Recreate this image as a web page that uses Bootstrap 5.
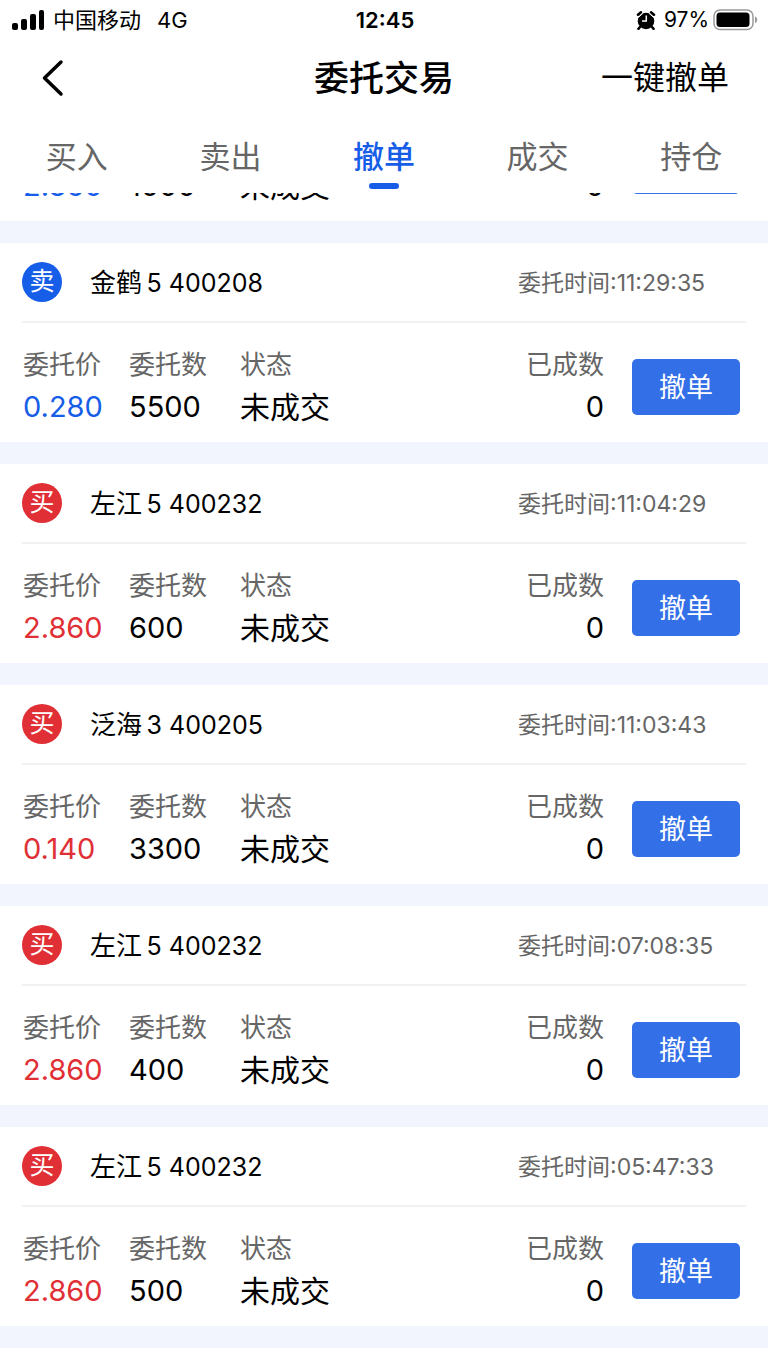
<!DOCTYPE html>
<html lang="zh-CN">
<head>
<meta charset="utf-8">
<meta name="viewport" content="width=device-width, initial-scale=1">
<title>委托交易</title>
<link href="https://cdn.jsdelivr.net/npm/bootstrap@5.3.0/dist/css/bootstrap.min.css" rel="stylesheet">
<style>
  body { font-family: Inter, "Noto Sans CJK SC", sans-serif; color: #000; background: #fff; }
  .status-bar { height: 40px; padding: 0 10px 0 12px; font-size: 22px; line-height: 40px; }
  .battery-level { font-size: 21px; }
  .side { flex: 1 1 0; }
  .top-bar { height: 76px; padding: 0 39px; }
  .top-bar h1 { font-size: 35px; line-height: 78px; font-weight: 500; }
  .plain-btn { border: 0; background: none; padding: 0; color: #000; font-size: 32px; line-height: 80px; }
  .tab-bar { height: 77px; }
  .tab-bar .nav-link { position: relative; padding: 0; height: 77px; color: #666; font-size: 31px; line-height: 82px; }
  .tab-bar .nav-link.active { color: #165de8; font-weight: 500; }
  .tab-bar .nav-link.active::after { content: ""; position: absolute; left: 50%; bottom: 4px; width: 30px; height: 6px; margin-left: -15px; border-radius: 3px; background: #165de8; }
  .order-list { background: #f2f5fd; gap: 22px; }
  .order { background: #fff; }
  .order-head { height: 80px; margin: 0 22px; border-bottom: 2px solid #f1f1f2; font-size: 26px; }
  .side-tag { width: 40px; height: 40px; margin-right: 28px; font-size: 25px; line-height: 38px; color: #fff; }
  .tag-buy { background: #e12f36; }
  .tag-sell { background: #165de8; }
  .order-name, .order-time { padding-top: 2px; }
  .order-code { font-size: 25px; }
  .order-time { width: 228px; font-size: 23px; color: #666; }
  .order-body { height: 119px; padding: 21px 28px 0 23px; }
  .order-body dt { font-size: 26px; line-height: 42px; font-weight: 400; color: #666; }
  .order-body dd { font-size: 29px; line-height: 42px; margin: 0; }
  .order-body .state { font-size: 30px; }
  .col-price { width: 106px; }
  .col-count { width: 111px; }
  .ink-buy { color: #e12f36; }
  .ink-sell { color: #165de8; }
  .cancel-btn { width: 108px; height: 56px; margin: 15px 0 0 28px; padding: 0; border: 0; border-radius: 5px; background: #3370e8; color: #fff; font-size: 27px; line-height: 58px; }
  .order-cut { height: 28px; overflow: hidden; }
  .order-cut .order-body { flex: none; }
  .order-cut dl { padding-top: 42px; }
</style>
</head>
<body>
<div class="d-flex flex-column vh-100 overflow-hidden">
  <header class="flex-shrink-0">
    <div class="status-bar d-flex align-items-center">
      <div class="side d-flex align-items-center">
        <svg width="33" height="20" viewBox="0 0 33 20" aria-hidden="true"><rect x="0" y="13" width="6" height="7" rx="2"/><rect x="9" y="9" width="6" height="11" rx="2"/><rect x="18" y="4" width="6" height="16" rx="2"/><rect x="27" y="0" width="5" height="20" rx="2"/></svg>
        <span class="ms-2">中国移动</span><span class="ms-3">4G</span>
      </div>
      <div class="fw-semibold">12:45</div>
      <div class="side d-flex align-items-center justify-content-end">
        <svg class="me-2" width="20" height="20" viewBox="0 0 20 20" aria-hidden="true"><circle cx="10" cy="11" r="8.300"/><path d="M2 4.800 5 2.300M18 4.800 15 2.300M4 17 2.400 18.800M16 17l1.600 1.800" stroke="#000" stroke-width="2.500" stroke-linecap="round"/><path d="M2.500 7.300 7.300 3M17.500 7.300 12.700 3" stroke="#fff" stroke-width="1"/><path d="M10.300 5.500V11H6" fill="none" stroke="#fff" stroke-width="1.500"/></svg>
        <span class="battery-level">97%</span>
        <svg class="ms-1" width="45" height="22" viewBox="0 0 45 22" aria-hidden="true"><rect x="1" y="1" width="39" height="19.500" rx="6" fill="none" stroke="#999" stroke-width="1.500"/><rect x="3.500" y="3.500" width="33" height="14.500" rx="3.500"/><path d="M42 7.500c3 .8 3 5.700 0 6.500z" fill="#999"/></svg>
      </div>
    </div>
    <div class="top-bar d-flex align-items-center">
      <div class="side">
        <button class="plain-btn d-flex" type="button" aria-label="返回"><svg width="26" height="38" viewBox="0 0 26 38" fill="none" stroke="#000" stroke-width="3.500" stroke-linecap="round" stroke-linejoin="round"><path d="M22 3 5.500 19 22 35"/></svg></button>
      </div>
      <h1 class="m-0">委托交易</h1>
      <div class="side text-end"><button class="plain-btn" type="button">一键撤单</button></div>
    </div>
    <nav class="tab-bar nav nav-fill">
      <a class="nav-link nav-item" href="#">买入</a>
      <a class="nav-link nav-item" href="#">卖出</a>
      <a class="nav-link nav-item active" aria-current="page" href="#">撤单</a>
      <a class="nav-link nav-item" href="#">成交</a>
      <a class="nav-link nav-item" href="#">持仓</a>
    </nav>
  </header>
  <main class="flex-fill overflow-hidden">
    <div class="order-list d-flex flex-column" id="orders">
      <article class="order order-cut d-flex flex-column justify-content-end">
        <div class="order-body d-flex">
          <dl class="d-flex flex-fill m-0">
            <div class="col-price"><dd class="ink-sell">2.860</dd></div>
            <div class="col-count"><dd>1000</dd></div>
            <div class="flex-fill"><dd class="state">未成交</dd></div>
            <div class="text-end"><dd>0</dd></div>
          </dl>
          <button class="cancel-btn" type="button" aria-label="撤单"></button>
        </div>
      </article>
    </div>
  </main>
</div>
<script src="https://cdn.jsdelivr.net/npm/bootstrap@5.3.0/dist/js/bootstrap.bundle.min.js"></script>
<script>
  const orders = [
    ['sell', '金鹤', '5 400208', '11:29:35', '0.280', 5500],
    ['buy', '左江', '5 400232', '11:04:29', '2.860', 600],
    ['buy', '泛海', '3 400205', '11:03:43', '0.140', 3300],
    ['buy', '左江', '5 400232', '07:08:35', '2.860', 400],
    ['buy', '左江', '5 400232', '05:47:33', '2.860', 500]
  ];
  const list = document.getElementById('orders');
  for (const [side, name, code, time, price, count] of orders) {
    list.insertAdjacentHTML('beforeend', `
      <article class="order">
        <div class="order-head d-flex align-items-center">
          <span class="side-tag tag-${side} rounded-circle text-center">${side === 'buy' ? '买' : '卖'}</span>
          <span class="order-name flex-fill">${name}<span class="order-code">&thinsp;${code}</span></span>
          <span class="order-time">委托时间:${time}</span>
        </div>
        <div class="order-body d-flex">
          <dl class="d-flex flex-fill m-0">
            <div class="col-price"><dt>委托价</dt><dd class="ink-${side}">${price}</dd></div>
            <div class="col-count"><dt>委托数</dt><dd>${count}</dd></div>
            <div class="flex-fill"><dt>状态</dt><dd class="state">未成交</dd></div>
            <div class="text-end"><dt>已成数</dt><dd>0</dd></div>
          </dl>
          <button class="cancel-btn" type="button">撤单</button>
        </div>
      </article>`);
  }
  list.insertAdjacentHTML('beforeend', '<div class="order py-3"></div>');
</script>
</body>
</html>
